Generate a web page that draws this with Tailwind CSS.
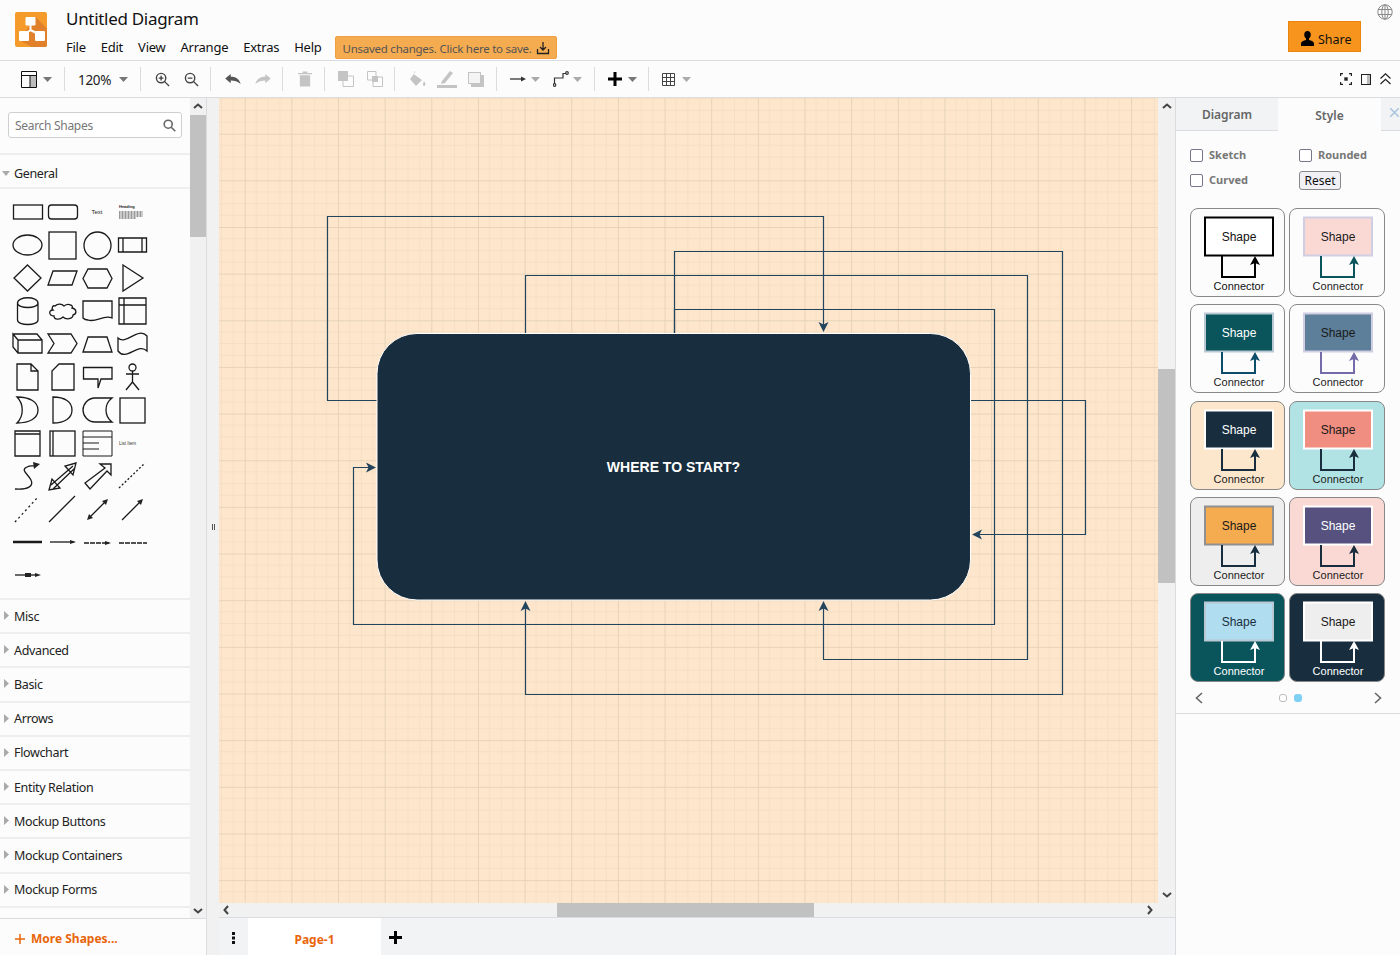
<!DOCTYPE html>
<html lang="en">
<head>
<meta charset="UTF-8">
<title>Untitled Diagram</title>
<script src="https://cdn.jsdelivr.net/npm/@tailwindcss/browser@4"></script>
</head>
<body class="bg-[#fcfcfc] font-['Noto_Sans',sans-serif] text-[#222]">
<div class="w-[1400px] h-[955px] flex flex-col overflow-hidden">

  <!-- Header -->
  <header class="relative h-[61px] shrink-0 border-b border-[#dadce0] flex">
    <svg class="ml-[15px] mt-[12px]" width="32" height="35" viewBox="0 0 32 35">
      <rect width="32" height="35" rx="2" fill="#f49b2c"/>
      <path d="M21 5 L32 17 V33 a2 2 0 0 1 -2 2 H17 L4 28 Z" fill="#e0802a"/>
      <path d="M15.5 12 V18 M15.5 18 L9 23 M15.5 18 L25 23" stroke="#fff" stroke-width="2" fill="none"/>
      <rect x="10.5" y="5" width="10" height="8.5" rx="1" fill="#fff"/>
      <rect x="4" y="19" width="10" height="10" rx="1" fill="#fff"/>
      <rect x="20" y="19" width="10" height="10" rx="1" fill="#fff"/>
    </svg>
    <div class="ml-[19px] flex flex-col">
      <div class="mt-[7px] text-[17px] leading-[24px] tracking-[-0.3px] text-[#111]">Untitled Diagram</div>
      <div class="mt-[5px] flex items-center text-[13px] leading-[23px] tracking-[-0.25px] text-[#111]">
        <span>File</span><span class="ml-[15px]">Edit</span><span class="ml-[15px]">View</span><span class="ml-[15px]">Arrange</span><span class="ml-[15px]">Extras</span><span class="ml-[15px]">Help</span>
        <div class="ml-[13px] h-[23px] w-[222px] bg-[#f5ab50] border border-[#f0a040] rounded-[2px] flex items-center pl-[7px] text-[11.5px] tracking-[-0.25px] whitespace-nowrap text-[#555]">
          <span class="pt-[1px]">Unsaved changes. Click here to save.</span>
          <svg class="ml-[4px] shrink-0" width="14" height="14" viewBox="0 0 14 14" fill="none" stroke="#222" stroke-width="1.3"><path d="M7 1 V9 M4 6 L7 9 L10 6 M1.5 8 V12.5 H12.5 V8"/></svg>
        </div>
      </div>
    </div>
    <svg class="absolute left-[1377px] top-[4px]" width="16" height="16" viewBox="0 0 16 16" fill="none" stroke="#8a8a8a" stroke-width="1"><circle cx="8" cy="8" r="7.2"/><ellipse cx="8" cy="8" rx="3.2" ry="7.2"/><path d="M8 .8 V15.2 M1 5.5 H15 M1 10.5 H15"/></svg>
    <div class="absolute left-[1288px] top-[21px] w-[73px] h-[31px] bg-[#f7941e] border border-[#e9840c] flex items-center pl-[11px] pt-[4px] text-[12.5px] text-[#111]">
      <svg width="15" height="15" viewBox="0 0 15 15" fill="#000"><path d="M7.5 0 C5.4 0 4.2 1.6 4.2 3.6 C4.2 5.4 5 6.8 6 7.6 V9 C3.5 9.7 1 10.6 1 12.5 V15 H14 V12.5 C14 10.6 11.5 9.7 9 9 V7.6 C10 6.8 10.8 5.4 10.8 3.6 C10.8 1.6 9.6 0 7.5 0 Z"/></svg>
      <span class="ml-[3px] mt-[3px]">Share</span>
    </div>
  </header>

  <!-- Toolbar -->
  <div class="relative h-[37px] shrink-0 border-b border-[#dadce0] flex items-center text-[#444]">
    <svg class="ml-[21px]" width="16" height="17" viewBox="0 0 16 17"><rect x="9" y="5" width="6.5" height="11" fill="#bbb"/><path d="M.5 .5 H15.5 V16.5 H.5 Z M.5 4.5 H15.5 M9 4.5 V16.5" fill="none" stroke="#111"/></svg>
    <svg class="ml-[6px]" width="9" height="5" viewBox="0 0 9 5" fill="#777"><path d="M0 0 H9 L4.5 5 Z"/></svg>
    <div class="ml-[12px] w-px h-[24px] bg-[#dadce0]"></div>
    <span class="ml-[13px] w-[32px] text-[13.5px] tracking-[-0.3px] pt-[2px] text-[#222]">120%</span>
    <svg class="ml-[9px]" width="9" height="5" viewBox="0 0 9 5" fill="#777"><path d="M0 0 H9 L4.5 5 Z"/></svg>
    <div class="ml-[12px] w-px h-[24px] bg-[#dadce0]"></div>
    <svg class="ml-[14px]" width="15" height="15" viewBox="0 0 16 16" fill="none" stroke="#444" stroke-width="1.5"><circle cx="6.5" cy="6.5" r="5"/><path d="M10 10 L15 15 M4 6.5 H9 M6.5 4 V9"/></svg>
    <svg class="ml-[14px]" width="15" height="15" viewBox="0 0 16 16" fill="none" stroke="#444" stroke-width="1.5"><circle cx="6.5" cy="6.5" r="5"/><path d="M10 10 L15 15 M4 6.5 H9"/></svg>
    <div class="ml-[11px] w-px h-[24px] bg-[#dadce0]"></div>
    <svg class="ml-[14px]" width="16" height="11" viewBox="0 0 17 12" fill="#555"><path d="M0 5 L6 0 V3 C11 3 15 5 17 11 C14 8 10 7 6 7 V10 Z"/></svg>
    <svg class="ml-[14px]" width="16" height="11" viewBox="0 0 17 12" fill="#c4c4c4"><path d="M17 5 L11 0 V3 C6 3 2 5 0 11 C3 8 7 7 11 7 V10 Z"/></svg>
    <div class="ml-[11px] w-px h-[24px] bg-[#dadce0]"></div>
    <svg class="ml-[15px]" width="14" height="16" viewBox="0 0 15 16" fill="#c4c4c4"><path d="M0 1.5 H15 V3 H0 Z M5 0 H10 V1.5 H5 Z M2 4 H13 V16 H2 Z"/></svg>
    <div class="ml-[12px] w-px h-[24px] bg-[#dadce0]"></div>
    <svg class="ml-[13px]" width="16" height="16" viewBox="0 0 16 16"><path d="M5 5 H15.5 V15.5 H5 Z" fill="none" stroke="#c4c4c4"/><rect width="10" height="10" fill="#c4c4c4"/></svg>
    <svg class="ml-[13px]" width="16" height="16" viewBox="0 0 16 16"><path d="M.5 .5 H9 V9 H.5 Z M6 6 H15.5 V15.5 H6 Z" fill="none" stroke="#c4c4c4"/><rect x="5" y="5" width="6" height="6" fill="#c4c4c4"/></svg>
    <div class="ml-[11px] w-px h-[24px] bg-[#dadce0]"></div>
    <svg class="ml-[15px]" width="17" height="16" viewBox="0 0 17 16" fill="#c4c4c4"><path d="M4 0 L5 1 L3.5 3 L12 9 L6 15 L0 8 L4 3 Z M14 10 C15 12 16 13 15 14.5 C14 15.5 12.5 14.5 13 13 Z"/></svg>
    <svg class="ml-[10px]" width="20" height="18" viewBox="0 0 20 18"><path d="M5 11 L13 1 L16 3 L8 13 L4 14 Z" fill="#c4c4c4"/><rect y="15" width="20" height="3" fill="#c4c4c4"/></svg>
    <svg class="ml-[11px]" width="16" height="15" viewBox="0 0 16 15"><rect x="3" y="3" width="13" height="12" fill="#c4c4c4"/><rect x=".5" y=".5" width="12" height="11" fill="#f4f4f4" stroke="#c4c4c4"/></svg>
    <div class="ml-[12px] w-px h-[24px] bg-[#dadce0]"></div>
    <svg class="ml-[13px]" width="16" height="8" viewBox="0 0 16 8"><path d="M0 4 H12" stroke="#333" stroke-width="1.3"/><path d="M16 4 L11 1.5 V6.5 Z" fill="#333"/></svg>
    <svg class="ml-[5px]" width="9" height="5" viewBox="0 0 9 5" fill="#aaa"><path d="M0 0 H9 L4.5 5 Z"/></svg>
    <svg class="ml-[13px]" width="16" height="16" viewBox="0 0 16 16" fill="none" stroke="#333" stroke-width="1.2"><path d="M1.5 13 V7 H10 V2.5 H13"/><circle cx="1.5" cy="14" r="1.3"/><circle cx="14" cy="2" r="1.3"/></svg>
    <svg class="ml-[4px]" width="9" height="5" viewBox="0 0 9 5" fill="#aaa"><path d="M0 0 H9 L4.5 5 Z"/></svg>
    <div class="ml-[12px] w-px h-[24px] bg-[#dadce0]"></div>
    <svg class="ml-[13px]" width="14" height="14" viewBox="0 0 14 14" fill="#000"><path d="M5.5 0 H8.5 V5.5 H14 V8.5 H8.5 V14 H5.5 V8.5 H0 V5.5 H5.5 Z"/></svg>
    <svg class="ml-[6px]" width="9" height="5" viewBox="0 0 9 5" fill="#777"><path d="M0 0 H9 L4.5 5 Z"/></svg>
    <div class="ml-[11px] w-px h-[24px] bg-[#dadce0]"></div>
    <svg class="ml-[13px]" width="13" height="13" viewBox="0 0 13 13" fill="none" stroke="#444"><path d="M.5 .5 H12.5 V12.5 H.5 Z M4.5 .5 V12.5 M8.5 .5 V12.5 M.5 4.5 H12.5 M.5 8.5 H12.5"/></svg>
    <svg class="ml-[7px]" width="9" height="5" viewBox="0 0 9 5" fill="#aaa"><path d="M0 0 H9 L4.5 5 Z"/></svg>

    <div class="ml-auto mr-[9px] flex items-center">
      <svg width="12" height="12" viewBox="0 0 12 12" fill="none" stroke="#222" stroke-width="1.2"><path d="M0.6 3 V0.6 H3 M9 .6 H11.4 V3 M11.4 9 V11.4 H9 M3 11.4 H.6 V9"/><rect x="4.3" y="4.3" width="3.4" height="3.4" fill="#222" stroke="none"/></svg>
      <svg class="ml-[9px]" width="10" height="11" viewBox="0 0 10 11"><rect x="6" y=".5" width="3.5" height="10" fill="#bbb"/><rect x=".5" y=".5" width="9" height="10" fill="none" stroke="#222"/></svg>
      <svg class="ml-[9px]" width="11" height="12" viewBox="0 0 11 12" fill="none" stroke="#222" stroke-width="1.2"><path d="M.5 5.5 L5.5 .8 L10.5 5.5 M.5 11 L5.5 6.3 L10.5 11"/></svg>
    </div>
  </div>

  <!-- Main -->
  <div class="flex-1 flex min-h-0">

    <!-- Shapes sidebar -->
    <aside class="w-[207px] shrink-0 border-r border-[#dadce0] flex flex-col">
      <div class="flex-1 min-h-0 flex">
        <div class="w-[190px] shrink-0">
          <div class="h-[57px] border-b-2 border-[#eeeeee] pt-[14px] pl-[8px]">
            <div class="relative w-[174px] h-[26px] border border-[#cfcfcf] rounded-[3px] bg-white flex items-center pl-[6px] pt-[2px] text-[12px] tracking-[-0.3px] text-[#777]">
              Search Shapes
              <svg class="absolute right-[5px] top-[6px]" width="13" height="13" viewBox="0 0 13 13" fill="none" stroke="#666" stroke-width="1.6"><circle cx="5.2" cy="5.2" r="4"/><path d="M8.2 8.2 L12.3 12.3"/></svg>
            </div>
          </div>
          <div class="h-[34px] border-b-2 border-[#eeeeee] flex items-center pt-[6px] text-[12.5px] tracking-[-0.35px]">
            <svg class="ml-[2px] mb-[2px]" width="8" height="5" viewBox="0 0 8 5" fill="#aaa"><path d="M0 0 H8 L4 5 Z"/></svg>
            <span class="ml-[4px]">General</span>
          </div>

          <!-- Shape palette, drawn in page coordinates -->
          <svg class="block" width="190" height="409" viewBox="0 189 190 409" fill="none" stroke="#1a1a1a" stroke-width="1.3">
            <rect x="13.5" y="205" width="29" height="14"/>
            <rect x="48.5" y="205" width="29" height="14" rx="3"/>
            <text x="97" y="214" font-size="6" text-anchor="middle" fill="#222" stroke="none" font-family="Liberation Sans, sans-serif">Text</text>
            <text x="119" y="208" font-size="4" font-weight="700" fill="#222" stroke="none" font-family="Liberation Sans, sans-serif">Heading</text>
            <path d="M119 212 H143 M119 214 H143 M119 216 H143 M119 218 H136" stroke="#777" stroke-dasharray="1 .5"/>

            <ellipse cx="27.5" cy="245" rx="14.5" ry="10"/>
            <rect x="49" y="232" width="27" height="27"/>
            <circle cx="97.5" cy="245.5" r="13.5"/>
            <path d="M118.5 238 H146.5 V252 H118.5 Z M123 238 V252 M142 238 V252"/>

            <path d="M27.5 265 L41 278 L27.5 291 L14 278 Z"/>
            <path d="M53 271 H77 L72 285 H48 Z"/>
            <path d="M88 269 H107 L112 278.5 L107 288 H88 L83 278.5 Z"/>
            <path d="M123 265 L143 278 L123 291 Z"/>

            <path d="M17.5 303 C17.5 296 38 296 38 303 V320 C38 326 17.5 326 17.5 320 Z M17.5 303 C17.5 309 38 309 38 303"/>
            <path d="M55 306 C58 303 62 304 64 306 C68 303 74 305 72 308 C77 309 77 314 73 315 C73 319 66 320 63 317 C60 320 54 320 54 316 C49 316 48 310 53 310 C51 308 53 305 55 306 Z"/>
            <path d="M83 301 H112 V318 C104 314 96 323 88 320 C86 320 84 319 83 318 Z"/>
            <path d="M119 298 H146 V324 H119 Z M124 298 V324 M119 305 H146"/>

            <path d="M13 334 L18 340 H42 V353 H18 L13 347 Z M13 334 H37 L42 340 M18 340 V353"/>
            <path d="M48 334 H71 L77 343.5 L71 353 H48 L54 343.5 Z"/>
            <path d="M88 337 H107 L112 352 H83 Z"/>
            <path d="M118 338 C126 346 138 326 147 336 V351 C138 342 126 362 118 351 Z"/>

            <path d="M17 364 H31 L38 371 V390 H17 Z M31 364 V371 H38"/>
            <path d="M59 364 H74 V390 H52 V371 Z"/>
            <path d="M83.5 367.5 H112 V379 H101 L98 388 V379 H83.5 Z"/>
            <circle cx="132.5" cy="367.5" r="3.5"/>
            <path d="M132.5 371 V382 M126 374 H139 M132.5 382 L126 390 M132.5 382 L139 390"/>

            <path d="M17 397 C30 397 38 402 38 410 C38 418 30 423 17 423 C24 416 24 404 17 397 Z"/>
            <path d="M53 397 C65 397 72 402 72 410 C72 418 65 423 53 423 Z"/>
            <path d="M95 398 H112 C104 404 104 416 112 422 H95 C88 422 83 416 83 410 C83 404 88 398 95 398 Z"/>
            <rect x="120" y="398" width="25" height="25"/>

            <path d="M15 431 H40 V456 H15 Z M15 434 H40"/>
            <rect x="50" y="431" width="25" height="25"/>
            <path d="M53 431 V456"/>
            <path d="M83 431 H112 V456 H83 Z M83 437 H112 M83 443 H99 M83 449 H99" stroke-width="1"/>
            <text x="119" y="445" font-size="4.5" fill="#333" stroke="none" font-family="Liberation Sans, sans-serif">List Item</text>

            <path d="M15 489 C28 490 34 486 31 480 C28 474 20 470 27 467 C30 465 33 466 36 466"/>
            <path d="M40 464 L33 462 L34 469 Z" fill="#222" stroke="none"/>
            <path d="M51 485 L73 466 M53 489 L75 468 M49 490 L52 479 L60 488 Z M76 463 L65 466 L73 475 Z" fill="#fafafa"/>
            <path d="M85 483 L105 468 L100 464 H111 V475 L107 471 L90 489 Z" fill="#fafafa"/>
            <path d="M119 488 L145 463" stroke-dasharray="2 2"/>

            <path d="M15 522 L38 497" stroke-dasharray="2 3"/>
            <path d="M49 522 L75 496"/>
            <path d="M89 518 L106 501"/>
            <path d="M87 520 L93 518 L89 514 Z M108 499 L102 501 L106 505 Z" fill="#222" stroke="none"/>
            <path d="M122 520 L140 502"/>
            <path d="M143 499 L137 501 L141 505 Z" fill="#222" stroke="none"/>

            <path d="M13 542 H42" stroke-width="2.5"/>
            <path d="M50 542 H74"/><path d="M76 542 L70 540 V544 Z" fill="#222" stroke="none"/>
            <path d="M84 543 H109" stroke-width="1.5" stroke-dasharray="5 1"/><path d="M111 543 L105 541 V545 Z" fill="#222" stroke="none"/>
            <path d="M119 543 H147" stroke-width="1.5" stroke-dasharray="5 1"/>

            <path d="M15 575 H38"/><rect x="25" y="573" width="6" height="4" fill="#222" stroke="none"/><path d="M41 575 L35 573 V577 Z" fill="#222" stroke="none"/>
          </svg>

          <div class="border-t-2 border-[#eeeeee] text-[12.5px] tracking-[-0.35px]">
            <div class="h-[34.2px] border-b-2 border-[#eeeeee] flex items-center pt-[2px]"><svg class="ml-[4px] mb-[3px]" width="5" height="9" viewBox="0 0 5 9" fill="#aaa"><path d="M0 0 L5 4.5 L0 9 Z"/></svg><span class="ml-[5px]">Misc</span></div>
            <div class="h-[34.2px] border-b-2 border-[#eeeeee] flex items-center pt-[2px]"><svg class="ml-[4px] mb-[3px]" width="5" height="9" viewBox="0 0 5 9" fill="#aaa"><path d="M0 0 L5 4.5 L0 9 Z"/></svg><span class="ml-[5px]">Advanced</span></div>
            <div class="h-[34.2px] border-b-2 border-[#eeeeee] flex items-center pt-[2px]"><svg class="ml-[4px] mb-[3px]" width="5" height="9" viewBox="0 0 5 9" fill="#aaa"><path d="M0 0 L5 4.5 L0 9 Z"/></svg><span class="ml-[5px]">Basic</span></div>
            <div class="h-[34.2px] border-b-2 border-[#eeeeee] flex items-center pt-[2px]"><svg class="ml-[4px] mb-[3px]" width="5" height="9" viewBox="0 0 5 9" fill="#aaa"><path d="M0 0 L5 4.5 L0 9 Z"/></svg><span class="ml-[5px]">Arrows</span></div>
            <div class="h-[34.2px] border-b-2 border-[#eeeeee] flex items-center pt-[2px]"><svg class="ml-[4px] mb-[3px]" width="5" height="9" viewBox="0 0 5 9" fill="#aaa"><path d="M0 0 L5 4.5 L0 9 Z"/></svg><span class="ml-[5px]">Flowchart</span></div>
            <div class="h-[34.2px] border-b-2 border-[#eeeeee] flex items-center pt-[2px]"><svg class="ml-[4px] mb-[3px]" width="5" height="9" viewBox="0 0 5 9" fill="#aaa"><path d="M0 0 L5 4.5 L0 9 Z"/></svg><span class="ml-[5px]">Entity Relation</span></div>
            <div class="h-[34.2px] border-b-2 border-[#eeeeee] flex items-center pt-[2px]"><svg class="ml-[4px] mb-[3px]" width="5" height="9" viewBox="0 0 5 9" fill="#aaa"><path d="M0 0 L5 4.5 L0 9 Z"/></svg><span class="ml-[5px]">Mockup Buttons</span></div>
            <div class="h-[34.2px] border-b-2 border-[#eeeeee] flex items-center pt-[2px]"><svg class="ml-[4px] mb-[3px]" width="5" height="9" viewBox="0 0 5 9" fill="#aaa"><path d="M0 0 L5 4.5 L0 9 Z"/></svg><span class="ml-[5px]">Mockup Containers</span></div>
            <div class="h-[34.2px] border-b-2 border-[#eeeeee] flex items-center pt-[2px]"><svg class="ml-[4px] mb-[3px]" width="5" height="9" viewBox="0 0 5 9" fill="#aaa"><path d="M0 0 L5 4.5 L0 9 Z"/></svg><span class="ml-[5px]">Mockup Forms</span></div>
          </div>
        </div>
        <!-- sidebar scrollbar -->
        <div class="w-[16px] bg-[#f1f1f1] flex flex-col items-center">
          <svg class="mt-[5px]" width="10" height="6" viewBox="0 0 10 6" fill="none" stroke="#444" stroke-width="2"><path d="M1 5 L5 1.5 L9 5"/></svg>
          <div class="mt-[6px] w-full h-[122px] bg-[#c1c1c1]"></div>
          <svg class="mt-auto mb-[4px]" width="10" height="6" viewBox="0 0 10 6" fill="none" stroke="#444" stroke-width="2"><path d="M1 1 L5 4.5 L9 1"/></svg>
        </div>
      </div>
      <div class="h-[37px] shrink-0 border-t border-[#dadce0] flex items-center pl-[15px] pt-[4px] text-[12px] font-bold text-[#e8650a]">
        <svg width="10" height="10" viewBox="0 0 10 10" stroke="#e8650a" stroke-width="1.5"><path d="M0 5 H10 M5 0 V10"/></svg>
        <span class="ml-[6px]">More Shapes...</span>
      </div>
    </aside>

    <!-- Divider -->
    <div class="w-[12px] shrink-0 bg-[#f1f1f1] flex items-center justify-center">
      <div class="flex gap-px"><div class="w-px h-[6px] bg-[#555]"></div><div class="w-px h-[6px] bg-[#555]"></div></div>
    </div>

    <!-- Canvas column -->
    <div class="w-[956px] shrink-0 flex flex-col">
      <div class="flex-1 min-h-0 flex">
        <div class="w-[939px] shrink-0 relative overflow-hidden bg-[#fde6cc]">
          <svg class="absolute inset-0" width="939" height="805" viewBox="219 98 939 805">
            <defs>
              <pattern id="grid" patternUnits="userSpaceOnUse" x="338" y="227" width="46.65" height="46.65">
                <path d="M11.66 0 V46.65 M23.32 0 V46.65 M34.98 0 V46.65 M0 11.66 H46.65 M0 23.32 H46.65 M0 34.98 H46.65" stroke="#f5dfc4" stroke-width="1" fill="none"/>
                <path d="M.5 0 V46.65 M0 .5 H46.65" stroke="#e6d3b8" stroke-width="1" fill="none"/>
              </pattern>
            </defs>
            <rect x="219" y="98" width="939" height="805" fill="url(#grid)"/>
            <g fill="none" stroke="#23445d" stroke-width="1.2">
              <path d="M377 400.5 H327.5 V216.5 H823.5 V326"/>
              <path d="M674.5 333 V251.5 H1062.5 V694.5 H525.5 V607"/>
              <path d="M525.5 333 V275.5 H1027.5 V659.5 H823.5 V607"/>
              <path d="M674.5 333 V309.5 H994.5 V624.5 H353.5 V467.5 H370"/>
              <path d="M970 400.5 H1085.5 V534.5 H978"/>
            </g>
            <g fill="#23445d">
              <path d="M823.5 332 L818.5 322 L823.5 324.5 L828.5 322 Z"/>
              <path d="M525.5 601 L520.5 611 L525.5 608.5 L530.5 611 Z"/>
              <path d="M823.5 601 L818.5 611 L823.5 608.5 L828.5 611 Z"/>
              <path d="M376 467.5 L366 462.5 L368.5 467.5 L366 472.5 Z"/>
              <path d="M972 534.5 L982 529.5 L979.5 534.5 L982 539.5 Z"/>
            </g>
            <rect x="377" y="333.5" width="593.5" height="266.5" rx="40" fill="#182e3e" stroke="#fff" stroke-width="1"/>
            <text x="673.5" y="472" text-anchor="middle" font-family="Liberation Sans, Arial, sans-serif" font-size="14" font-weight="700" fill="#fff">WHERE TO START?</text>
          </svg>
        </div>
        <!-- vertical scrollbar -->
        <div class="w-[17px] bg-[#f1f1f1] flex flex-col items-center">
          <svg class="mt-[5px]" width="10" height="6" viewBox="0 0 10 6" fill="none" stroke="#444" stroke-width="2"><path d="M1 5 L5 1.5 L9 5"/></svg>
          <div class="mt-[260px] w-full h-[214px] bg-[#c1c1c1]"></div>
          <svg class="mt-auto mb-[5px]" width="10" height="6" viewBox="0 0 10 6" fill="none" stroke="#444" stroke-width="2"><path d="M1 1 L5 4.5 L9 1"/></svg>
        </div>
      </div>
      <!-- horizontal scrollbar -->
      <div class="h-[15px] shrink-0 bg-[#f1f1f1] border-b border-[#dadce0] flex items-center">
        <svg class="ml-[4px]" width="6" height="10" viewBox="0 0 6 10" fill="none" stroke="#444" stroke-width="2"><path d="M5 1 L1.5 5 L5 9"/></svg>
        <div class="ml-[328px] h-full w-[257px] bg-[#c1c1c1]"></div>
        <svg class="ml-[333px]" width="6" height="10" viewBox="0 0 6 10" fill="none" stroke="#444" stroke-width="2"><path d="M1 1 L4.5 5 L1 9"/></svg>
      </div>
      <!-- page tabs -->
      <div class="h-[37px] shrink-0 bg-[#f1f3f4] flex items-stretch">
        <div class="w-[29px] flex items-center justify-center pt-[2px]">
          <svg width="3" height="12" viewBox="0 0 3 12" fill="#111"><rect width="3" height="3"/><rect y="4.5" width="3" height="3"/><rect y="9" width="3" height="3"/></svg>
        </div>
        <div class="w-[133px] bg-white flex items-center justify-center pt-[6px] text-[12px] font-bold text-[#e8650a]">Page-1</div>
        <div class="w-[29px] flex items-center justify-center pt-[2px]">
          <svg width="13" height="13" viewBox="0 0 13 13" fill="#000"><path d="M5 0 H8 V5 H13 V8 H8 V13 H5 V8 H0 V5 H5 Z"/></svg>
        </div>
      </div>
    </div>

    <!-- Format panel -->
    <aside class="flex-1 border-l border-[#dadce0] flex flex-col">
      <div class="h-[33px] shrink-0 flex text-[12px] font-semibold text-[#666]">
        <div class="w-[102px] bg-[#f1f3f4] border-b border-[#dadce0] flex items-center justify-center pt-[2px]">Diagram</div>
        <div class="w-[103px] flex items-center justify-center pt-[2px]">Style</div>
        <div class="flex-1 bg-[#f1f3f4] border-b border-[#dadce0] flex items-start justify-end pr-[1px] pt-[10px]">
          <svg width="9" height="9" viewBox="0 0 9 9" stroke="#a9c4de" stroke-width="1.5"><path d="M0 0 L9 9 M9 0 L0 9"/></svg>
        </div>
      </div>

      <div class="px-[14px] pt-[15px] h-[583px] shrink-0 border-b border-[#dadce0]">
        <div class="grid grid-cols-[109px_1fr] content-start gap-y-[6px] text-[11px] font-bold text-[#777] h-[62px]">
          <div class="flex items-center h-[19px]"><span class="w-[13px] h-[13px] border border-[#77778a] rounded-[2px] bg-white"></span><span class="ml-[6px]">Sketch</span></div>
          <div class="flex items-center h-[19px]"><span class="w-[13px] h-[13px] border border-[#77778a] rounded-[2px] bg-white"></span><span class="ml-[6px]">Rounded</span></div>
          <div class="flex items-center h-[19px]"><span class="w-[13px] h-[13px] border border-[#77778a] rounded-[2px] bg-white"></span><span class="ml-[6px]">Curved</span></div>
          <div class="flex items-center h-[19px]"><span class="w-[42px] h-[19px] border border-[#888] rounded-[3px] bg-[#f0f0f5] flex items-center justify-center text-[12px] font-normal text-[#111]">Reset</span></div>
        </div>

        <div class="grid grid-cols-[95px_96px] gap-x-[4px] gap-y-[7.25px]">
          <div class="h-[89px] border border-[#888] rounded-[8px]">
            <svg width="93" height="87" viewBox="1 1 93 87" font-family="Liberation Sans, sans-serif" text-anchor="middle"><rect x="15" y="9.5" width="68" height="38" fill="#fff" stroke="#000" stroke-width="2"/><path d="M32 48 V69 H65 V54" fill="none" stroke="#000" stroke-width="2"/><path d="M65 48 L60 57 L65 55 L70 57 Z" fill="#000"/><text x="49" y="33" font-size="12" fill="#111">Shape</text><text x="49" y="82" font-size="11" fill="#111">Connector</text></svg>
          </div>
          <div class="h-[89px] border border-[#888] rounded-[8px]">
            <svg width="94" height="87" viewBox="1 1 94 87" font-family="Liberation Sans, sans-serif" text-anchor="middle"><rect x="15" y="9.5" width="68" height="38" fill="#fad9d5" stroke="#d0cee2" stroke-width="2"/><path d="M32 48 V69 H65 V54" fill="none" stroke="#09555b" stroke-width="2"/><path d="M65 48 L60 57 L65 55 L70 57 Z" fill="#09555b"/><text x="49" y="33" font-size="12" fill="#1a1a1a">Shape</text><text x="49" y="82" font-size="11" fill="#1a1a1a">Connector</text></svg>
          </div>
          <div class="h-[89px] border border-[#888] rounded-[8px]">
            <svg width="93" height="87" viewBox="1 1 93 87" font-family="Liberation Sans, sans-serif" text-anchor="middle"><rect x="15" y="9.5" width="68" height="38" fill="#09555b" stroke="#bac8d3" stroke-width="2"/><path d="M32 48 V69 H65 V54" fill="none" stroke="#0b4d6a" stroke-width="2"/><path d="M65 48 L60 57 L65 55 L70 57 Z" fill="#0b4d6a"/><text x="49" y="33" font-size="12" fill="#fff">Shape</text><text x="49" y="82" font-size="11" fill="#1a1a1a">Connector</text></svg>
          </div>
          <div class="h-[89px] border border-[#888] rounded-[8px]">
            <svg width="94" height="87" viewBox="1 1 94 87" font-family="Liberation Sans, sans-serif" text-anchor="middle"><rect x="15" y="9.5" width="68" height="38" fill="#5d7f99" stroke="#d0cee2" stroke-width="2"/><path d="M32 48 V69 H65 V54" fill="none" stroke="#736ca8" stroke-width="2"/><path d="M65 48 L60 57 L65 55 L70 57 Z" fill="#736ca8"/><text x="49" y="33" font-size="12" fill="#1a1a1a">Shape</text><text x="49" y="82" font-size="11" fill="#1a1a1a">Connector</text></svg>
          </div>
          <div class="h-[89px] border border-[#888] rounded-[8px] bg-[#fce7cd]">
            <svg width="93" height="87" viewBox="1 1 93 87" font-family="Liberation Sans, sans-serif" text-anchor="middle"><rect x="15" y="9.5" width="68" height="38" fill="#182e3e" stroke="#fff" stroke-width="2"/><path d="M32 48 V69 H65 V54" fill="none" stroke="#182e3e" stroke-width="2"/><path d="M65 48 L60 57 L65 55 L70 57 Z" fill="#182e3e"/><text x="49" y="33" font-size="12" fill="#fff">Shape</text><text x="49" y="82" font-size="11" fill="#1a1a1a">Connector</text></svg>
          </div>
          <div class="h-[89px] border border-[#888] rounded-[8px] bg-[#b1e3e4]">
            <svg width="94" height="87" viewBox="1 1 94 87" font-family="Liberation Sans, sans-serif" text-anchor="middle"><rect x="15" y="9.5" width="68" height="38" fill="#f08e81" stroke="#fff" stroke-width="2"/><path d="M32 48 V69 H65 V54" fill="none" stroke="#182e3e" stroke-width="2"/><path d="M65 48 L60 57 L65 55 L70 57 Z" fill="#182e3e"/><text x="49" y="33" font-size="12" fill="#1a1a1a">Shape</text><text x="49" y="82" font-size="11" fill="#1a1a1a">Connector</text></svg>
          </div>
          <div class="h-[89px] border border-[#888] rounded-[8px] bg-[#eeeeee]">
            <svg width="93" height="87" viewBox="1 1 93 87" font-family="Liberation Sans, sans-serif" text-anchor="middle"><rect x="15" y="9.5" width="68" height="38" fill="#f5ab50" stroke="#909090" stroke-width="2"/><path d="M32 48 V69 H65 V54" fill="none" stroke="#182e3e" stroke-width="2"/><path d="M65 48 L60 57 L65 55 L70 57 Z" fill="#182e3e"/><text x="49" y="33" font-size="12" fill="#1a1a1a">Shape</text><text x="49" y="82" font-size="11" fill="#1a1a1a">Connector</text></svg>
          </div>
          <div class="h-[89px] border border-[#888] rounded-[8px] bg-[#fad9d5]">
            <svg width="94" height="87" viewBox="1 1 94 87" font-family="Liberation Sans, sans-serif" text-anchor="middle"><rect x="15" y="9.5" width="68" height="38" fill="#56517e" stroke="#fff" stroke-width="2"/><path d="M32 48 V69 H65 V54" fill="none" stroke="#182e3e" stroke-width="2"/><path d="M65 48 L60 57 L65 55 L70 57 Z" fill="#182e3e"/><text x="49" y="33" font-size="12" fill="#fff">Shape</text><text x="49" y="82" font-size="11" fill="#1a1a1a">Connector</text></svg>
          </div>
          <div class="h-[89px] border border-[#888] rounded-[8px] bg-[#09555b]">
            <svg width="93" height="87" viewBox="1 1 93 87" font-family="Liberation Sans, sans-serif" text-anchor="middle"><rect x="15" y="9.5" width="68" height="38" fill="#b1ddf0" stroke="#bac8d3" stroke-width="2"/><path d="M32 48 V69 H65 V54" fill="none" stroke="#fff" stroke-width="2"/><path d="M65 48 L60 57 L65 55 L70 57 Z" fill="#fff"/><text x="49" y="33" font-size="12" fill="#182e3e">Shape</text><text x="49" y="82" font-size="11" fill="#fff">Connector</text></svg>
          </div>
          <div class="h-[89px] border border-[#888] rounded-[8px] bg-[#182e3e]">
            <svg width="94" height="87" viewBox="1 1 94 87" font-family="Liberation Sans, sans-serif" text-anchor="middle"><rect x="15" y="9.5" width="68" height="38" fill="#eeeeee" stroke="#fff" stroke-width="2"/><path d="M32 48 V69 H65 V54" fill="none" stroke="#fff" stroke-width="2"/><path d="M65 48 L60 57 L65 55 L70 57 Z" fill="#fff"/><text x="49" y="33" font-size="12" fill="#1a1a1a">Shape</text><text x="49" y="82" font-size="11" fill="#fff">Connector</text></svg>
          </div>
        </div>

        <div class="mt-[9px] h-[14px] flex items-center">
          <svg class="ml-[5px]" width="8" height="12" viewBox="0 0 8 12" fill="none" stroke="#666" stroke-width="1.6"><path d="M7 1 L1.5 6 L7 11"/></svg>
          <span class="ml-[76px] w-[8px] h-[8px] rounded-[3px] border border-[#bbb] bg-white"></span>
          <span class="ml-[7px] w-[8px] h-[8px] rounded-[3px] bg-[#7fd0f5]"></span>
          <svg class="ml-[72px]" width="8" height="12" viewBox="0 0 8 12" fill="none" stroke="#666" stroke-width="1.6"><path d="M1 1 L6.5 6 L1 11"/></svg>
        </div>
      </div>
    </aside>
  </div>
</div>
</body>
</html>
